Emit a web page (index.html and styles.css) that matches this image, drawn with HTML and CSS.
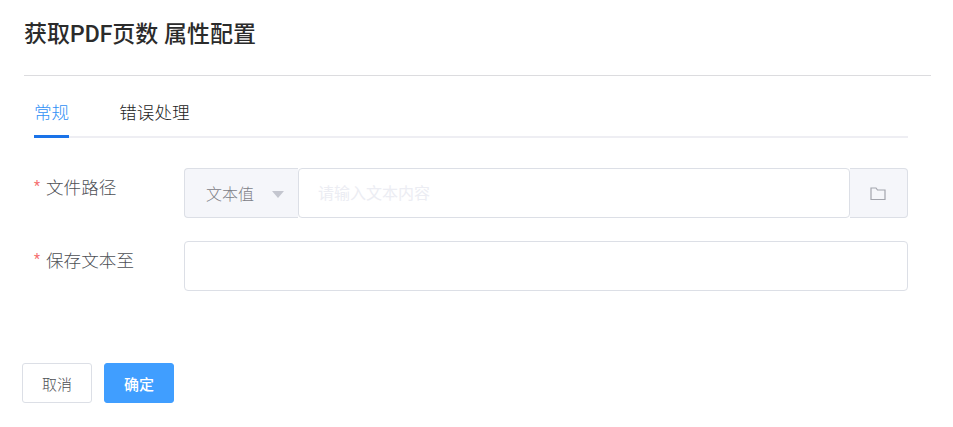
FILE: index.html
```html
<!DOCTYPE html>
<html>
<head>
<title>获取PDF页数 属性配置</title>
<link rel="stylesheet" href="styles.css">
</head>
<body>

<div class="dialog">
	<h1 class="title">获取PDF页数 属性配置</h1>

	<div class="content">
		<div class="tabs">
			<span class="tab active">常规</span>
			<span class="tab">错误处理</span>
		</div>

		<div class="field">
			<label class="label"><span class="star">*</span>文件路径</label>
			<div class="group">
				<div class="select">
					<span>文本值</span>
					<i class="caret"></i>
				</div>
				<input class="input" type="text" placeholder="请输入文本内容">
				<div class="append">
					<svg width="16" height="15" viewBox="0 0 16 15">
						<path d="M1 2h5l1.500 2H15v9.500H1z" fill="none" stroke="#a3a5ad" stroke-width="1.200"/>
					</svg>
				</div>
			</div>
		</div>

		<div class="field">
			<label class="label"><span class="star">*</span>保存文本至</label>
			<div class="group">
				<input class="input" type="text">
			</div>
		</div>
	</div>

	<div class="footer">
		<button class="btn">取消</button>
		<button class="btn primary">确定</button>
	</div>
</div>

</body>
</html>
```

FILE: styles.css
```css
body {
	margin: 0;
	background: #fff;
	font-family: Roboto, "Noto Sans CJK SC", sans-serif;
	color: #303133;
}

.dialog {
	width: 953px;
	height: 427px;
	box-sizing: border-box;
	padding-top: 18px;
}

.title {
	margin: 0 22px 0 24px;
	height: 57px;
	border-bottom: 1px solid #dcdcdf;
	font-size: 23px;
	line-height: 34px;
	font-weight: 500;
	color: #2b2b2b;
}

.content {
	margin: 0 45px 0 34px;
}

.tabs {
	display: flex;
	gap: 50px;
	height: 62px;
	box-sizing: border-box;
	border-bottom: 2px solid #eeeef3;
}

.tab {
	height: 62px;
	box-sizing: border-box;
	padding-top: 24px;
	font-size: 17.6px;
	font-weight: 300;
	line-height: 26px;
	color: #222;
}

.tab.active {
	color: #2f90f5;
	border-bottom: 3px solid #1a73e8;
}

.field {
	display: flex;
	margin-bottom: 23px;
}

.tabs + .field {
	margin-top: 30px;
}

.label {
	width: 150px;
	flex: none;
	padding-top: 7px;
	font-size: 17.6px;
	font-weight: 300;
	line-height: 26px;
	color: #4d4f55;
}

.star {
	display: inline-block;
	width: 12px;
	font-size: 14px;
	font-weight: 400;
	line-height: 14px;
	vertical-align: 3px;
	color: #f56c6c;
}

.group {
	display: flex;
	flex: 1;
	height: 50px;
}

.select {
	display: flex;
	align-items: center;
	width: 114px;
	box-sizing: border-box;
	padding-left: 21px;
	border: 1px solid #dcdfe6;
	border-right: none;
	border-radius: 4px 0 0 4px;
	background: #f5f6fa;
	font-size: 16px;
	font-weight: 300;
	color: #7d8087;
}

.caret {
	width: 0;
	height: 0;
	margin: 2px 0 0 18px;
	border-left: 6px solid transparent;
	border-right: 6px solid transparent;
	border-top: 7px solid #c4c6cf;
}

.input {
	flex: 1;
	min-width: 0;
	box-sizing: border-box;
	padding: 0 19px;
	border: 1px solid #dcdfe6;
	border-radius: 4px;
	outline: none;
	font-family: inherit;
	font-size: 16px;
}

.input::placeholder {
	color: #ecedf3;
}

.append {
	display: flex;
	align-items: center;
	justify-content: center;
	width: 58px;
	box-sizing: border-box;
	padding-right: 1px;
	border: 1px solid #dcdfe6;
	border-left: none;
	border-radius: 0 4px 4px 0;
	background: #f5f6fa;
}

.footer {
	display: flex;
	gap: 12px;
	margin: 72px 0 0 22px;
}

.btn {
	width: 70px;
	height: 40px;
	padding: 0;
	border: 1px solid #dcdfe6;
	border-radius: 3px;
	background: #fff;
	font-family: inherit;
	font-size: 15px;
	font-weight: 300;
	color: #4d4f55;
}

.btn.primary {
	border-color: #409eff;
	background: #409eff;
	color: #fff;
	font-weight: 500;
}
```
